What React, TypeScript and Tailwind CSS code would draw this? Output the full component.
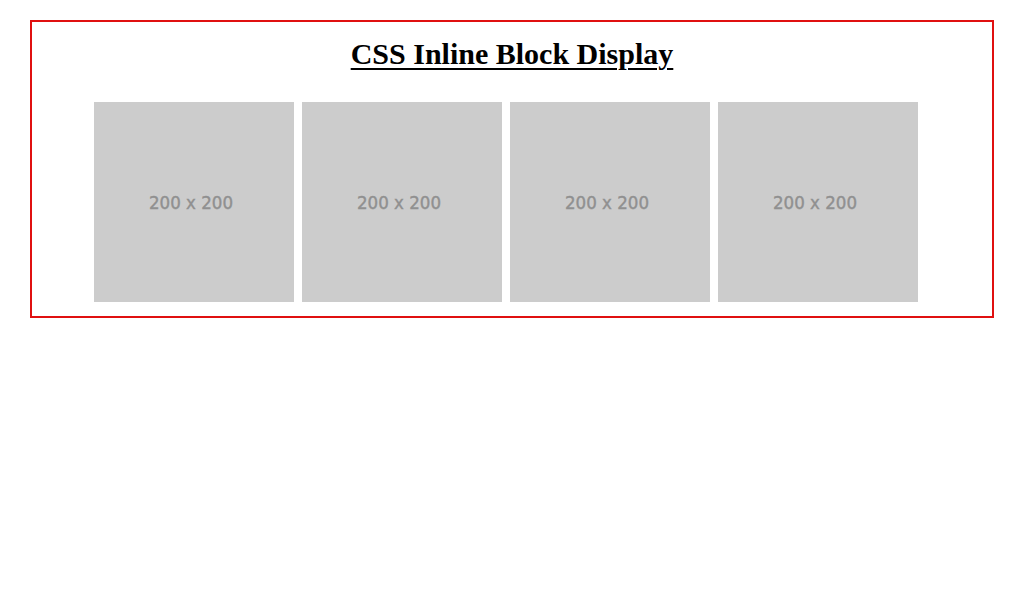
function Placeholder() {
    return (
        <div className="w-[200px] h-[200px] bg-[#cccccc] flex items-center justify-center">
            <span className="text-[18.5px] text-[#909090] font-['DejaVu_Sans_Condensed','DejaVu_Sans',sans-serif] [-webkit-text-stroke:0.4px_#909090] pr-[6px] pt-[2px]">
                200 x 200
            </span>
        </div>
    );
}

export default function App() {
    return (
        <div className="bg-white min-h-[600px] pt-[20px] px-[30px]">
            <div className="border-2 border-[#e01010] pt-[16px] pb-[14px]">
                <h1 className="text-center text-[30px] leading-[32px] font-bold underline underline-offset-[4px] decoration-[2px] text-black font-['Liberation_Serif','Times_New_Roman',serif]">
                    CSS Inline Block Display
                </h1>
                <div className="flex justify-center gap-2 pr-3 mt-[32px]">
                    <Placeholder />
                    <Placeholder />
                    <Placeholder />
                    <Placeholder />
                </div>
            </div>
        </div>
    );
}
